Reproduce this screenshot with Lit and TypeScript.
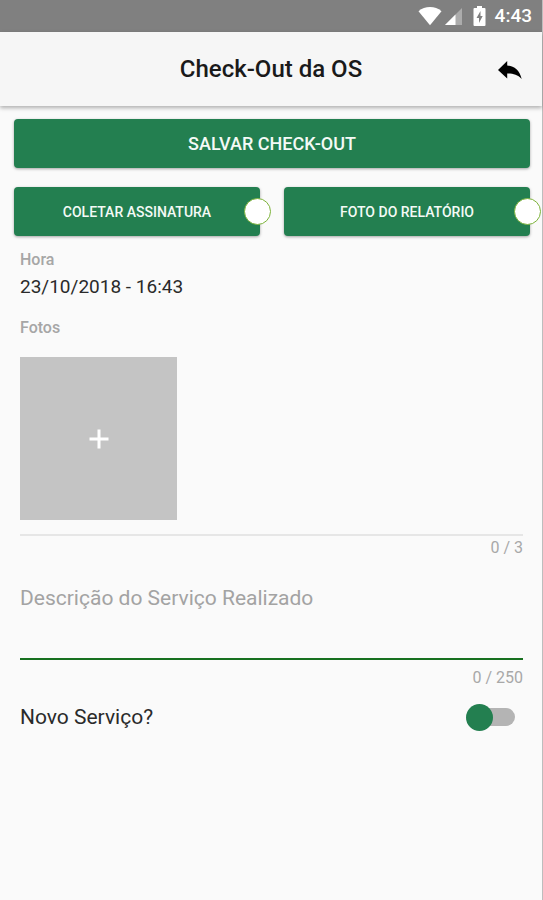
import { LitElement, html, css } from "lit";
import { customElement, state } from "lit/decorators.js";

@customElement("status-bar")
class StatusBar extends LitElement {
  static styles = css`
    :host {
      display: flex;
      align-items: center;
      justify-content: flex-end;
      box-sizing: border-box;
      height: 32px;
      padding-right: 10px;
      background: #808080;
      color: #fff;
      font: 500 19px/32px Roboto, sans-serif;
    }
    svg {
      display: block;
      fill: currentColor;
    }
    .wifi {
      margin-right: 2px;
    }
    .signal {
      margin-right: 10px;
    }
    .battery {
      margin-right: 9px;
    }
    .faded {
      opacity: 0.35;
    }
    .bolt {
      fill: #808080;
    }
  `;

  render() {
    return html`
      <svg class="wifi" width="24" height="20" viewBox="0 0 24 20" aria-hidden="true">
        <path d="M0.5 5.2Q5.5 1 12 1T23.500 5.200L12 19.200Z" />
      </svg>
      <svg class="signal" width="19" height="20" viewBox="0 0 19 20" aria-hidden="true">
        <path class="faded" d="M18 2V19H1Z" />
        <path d="M11.500 8.500V19H1Z" />
      </svg>
      <svg class="battery" width="13" height="20" viewBox="0 0 13 20" aria-hidden="true">
        <path d="M4 0H9V2H11.500Q12.500 2 12.500 3V19Q12.500 20 11.500 20H1.500Q.5 20 .5 19V3Q.5 2 1.500 2H4Z" />
        <path class="bolt" d="M7.500 5L3.500 12H6V17L9.700 10H7.500Z" />
      </svg>
      <span>4:43</span>
    `;
  }
}

@customElement("app-root")
class AppRoot extends LitElement {
  static styles = css`
    :host {
      display: block;
      box-sizing: border-box;
      min-height: 100vh;
      border-right: 1px solid #bdbdbd;
      background: #fafafa;
      color: #2a2a2a;
      font-family: Roboto, sans-serif;
    }
    button {
      border: 0;
      padding: 0;
      font-family: inherit;
      cursor: pointer;
    }
    .toolbar {
      display: grid;
      grid-template-columns: 48px 1fr 48px;
      align-items: center;
      height: 74px;
      padding: 0 8px;
      background: #f6f6f6;
      box-shadow: 0 2px 4px rgba(0, 0, 0, 0.3);
    }
    h1 {
      grid-column: 2;
      margin: 0;
      color: #1a1a1a;
      font-size: 24px;
      font-weight: 500;
      line-height: 32px;
      text-align: center;
    }
    .back {
      display: grid;
      place-items: center;
      height: 48px;
      background: none;
    }
    .back svg {
      display: block;
    }
    .actions {
      display: grid;
      grid-template-columns: 1fr 1fr;
      gap: 19px 24px;
      padding: 13px 12px 0 14px;
    }
    .action {
      position: relative;
      height: 49px;
      border-radius: 4px;
      background: #237f50;
      box-shadow: 0 1px 3px rgba(0, 0, 0, 0.35);
      color: #f4faf6;
      font-size: 14px;
      font-weight: 500;
      text-transform: uppercase;
    }
    .wide {
      grid-column: 1 / -1;
      font-size: 18px;
    }
    .badge {
      position: absolute;
      top: 11px;
      right: -11px;
      box-sizing: border-box;
      width: 27px;
      height: 27px;
      border: 1px solid #7db33a;
      border-radius: 50%;
      background: #fff;
    }
    .form {
      padding: 12px 19px 0 20px;
    }
    .label {
      margin: 0;
      color: #a6a6a6;
      font-size: 16px;
      font-weight: 500;
      line-height: 24px;
    }
    .value {
      margin: 0 0 14px;
      font-size: 19px;
      line-height: 30px;
    }
    .photos {
      padding: 17px 0 14px;
      border-bottom: 2px solid #e6e6e6;
    }
    .add {
      display: grid;
      place-items: center;
      width: 157px;
      height: 163px;
      background: #c4c4c4;
    }
    .counter {
      margin: 0;
      color: #a8a8a8;
      font-size: 16px;
      line-height: 24px;
      text-align: right;
    }
    textarea {
      display: block;
      box-sizing: border-box;
      width: 100%;
      height: 76px;
      margin: 24px 0 6px;
      padding: 0;
      border: 0;
      border-bottom: 2px solid #17701f;
      border-radius: 0;
      outline: 0;
      background: none;
      color: inherit;
      font: 21px/28px Roboto, sans-serif;
      resize: none;
    }
    textarea::placeholder {
      color: #a3a3a3;
      opacity: 1;
    }
    .toggle {
      display: flex;
      align-items: center;
      justify-content: space-between;
      margin-top: 11px;
      padding-right: 8px;
      font-size: 21px;
      line-height: 32px;
    }
    .switch {
      appearance: none;
      position: relative;
      display: flex;
      align-items: center;
      width: 49px;
      height: 27px;
      margin: 0;
      cursor: pointer;
    }
    .switch::before {
      content: "";
      position: absolute;
      right: 0;
      width: 38px;
      height: 18px;
      border-radius: 9px;
      background: #b4b4b4;
    }
    .switch::after {
      content: "";
      position: relative;
      width: 27px;
      height: 27px;
      border-radius: 50%;
      background: #237f50;
    }
    .switch:checked {
      justify-content: flex-end;
    }
  `;

  @state() private description = "";

  private onInput(event: Event) {
    this.description = (event.target as HTMLTextAreaElement).value;
  }

  render() {
    return html`
      <status-bar></status-bar>
      <header class="toolbar">
        <h1>Check-Out da OS</h1>
        <button class="back" type="button" aria-label="Voltar">
          <svg width="26" height="22" viewBox="0 0 26 22" aria-hidden="true">
            <path d="M10.200 3V7.500C17 8 22.500 12 24.700 21C20.500 16.500 16.500 15.500 10.200 15.500V20.500L1 12Z" />
          </svg>
        </button>
      </header>
      <main>
        <div class="actions">
          <button class="action wide" type="button">Salvar Check-Out</button>
          <button class="action" type="button">Coletar Assinatura<span class="badge"></span></button>
          <button class="action" type="button">Foto do Relatório<span class="badge"></span></button>
        </div>
        <div class="form">
          <p class="label">Hora</p>
          <p class="value">23/10/2018 - 16:43</p>
          <p class="label">Fotos</p>
          <div class="photos">
            <button class="add" type="button" aria-label="Adicionar foto">
              <svg width="20" height="20" viewBox="0 0 20 20" aria-hidden="true">
                <path d="M10 .5V19.500M.5 10H19.500" stroke="#fff" stroke-width="3" />
              </svg>
            </button>
          </div>
          <p class="counter">0 / 3</p>
          <textarea
            aria-label="Descrição do Serviço Realizado"
            placeholder="Descrição do Serviço Realizado"
            maxlength="250"
            .value=${this.description}
            @input=${this.onInput}
          ></textarea>
          <p class="counter">${this.description.length} / 250</p>
          <label class="toggle">
            Novo Serviço?
            <input class="switch" type="checkbox" role="switch" />
          </label>
        </div>
      </main>
    `;
  }
}
